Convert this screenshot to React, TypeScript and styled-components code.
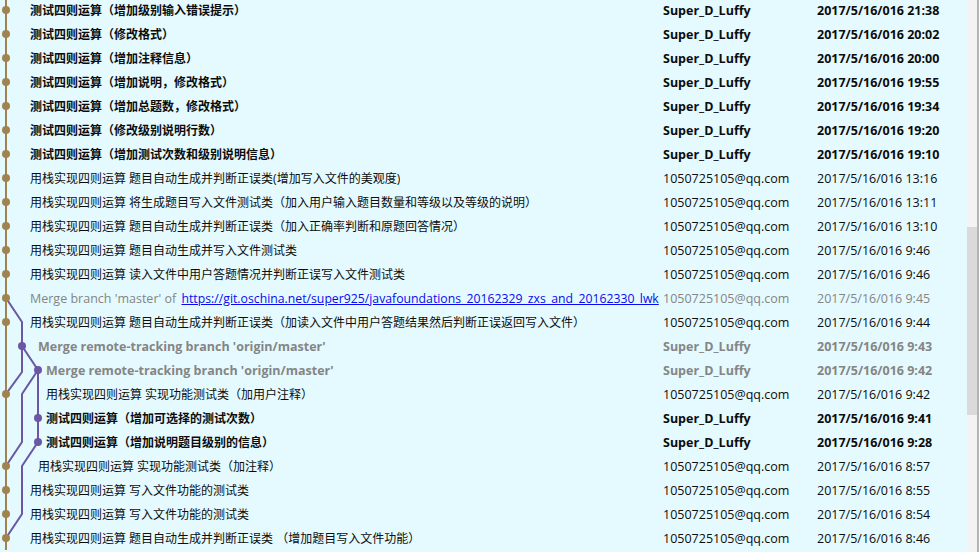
import styled, { createGlobalStyle } from 'styled-components';

type Tone = 'bold' | 'normal' | 'mergeBold' | 'mergeGray';

interface ICommit {
  message: string;
  link?: string;
  author: string;
  date: string;
  tone: Tone;
  lane: number;
  indent: number;
}

const LUFFY = 'Super_D_Luffy';
const QQ = '1050725105@qq.com';
const DAY = '2017/5/16/016';

const commits: ICommit[] = [
  { message: '测试四则运算（增加级别输入错误提示）', author: LUFFY, date: `${DAY} 21:38`, tone: 'bold', lane: 0, indent: 30 },
  { message: '测试四则运算（修改格式）', author: LUFFY, date: `${DAY} 20:02`, tone: 'bold', lane: 0, indent: 30 },
  { message: '测试四则运算（增加注释信息）', author: LUFFY, date: `${DAY} 20:00`, tone: 'bold', lane: 0, indent: 30 },
  { message: '测试四则运算（增加说明，修改格式）', author: LUFFY, date: `${DAY} 19:55`, tone: 'bold', lane: 0, indent: 30 },
  { message: '测试四则运算（增加总题数，修改格式）', author: LUFFY, date: `${DAY} 19:34`, tone: 'bold', lane: 0, indent: 30 },
  { message: '测试四则运算（修改级别说明行数）', author: LUFFY, date: `${DAY} 19:20`, tone: 'bold', lane: 0, indent: 30 },
  { message: '测试四则运算（增加测试次数和级别说明信息）', author: LUFFY, date: `${DAY} 19:10`, tone: 'bold', lane: 0, indent: 30 },
  { message: '用栈实现四则运算 题目自动生成并判断正误类(增加写入文件的美观度)', author: QQ, date: `${DAY} 13:16`, tone: 'normal', lane: 0, indent: 30 },
  { message: '用栈实现四则运算 将生成题目写入文件测试类（加入用户输入题目数量和等级以及等级的说明）', author: QQ, date: `${DAY} 13:11`, tone: 'normal', lane: 0, indent: 30 },
  { message: '用栈实现四则运算 题目自动生成并判断正误类（加入正确率判断和原题回答情况）', author: QQ, date: `${DAY} 13:10`, tone: 'normal', lane: 0, indent: 30 },
  { message: '用栈实现四则运算 题目自动生成并写入文件测试类', author: QQ, date: `${DAY} 9:46`, tone: 'normal', lane: 0, indent: 30 },
  { message: '用栈实现四则运算 读入文件中用户答题情况并判断正误写入文件测试类', author: QQ, date: `${DAY} 9:46`, tone: 'normal', lane: 0, indent: 30 },
  {
    message: "Merge branch 'master' of ",
    link: 'https://git.oschina.net/super925/javafoundations_20162329_zxs_and_20162330_lwk',
    author: QQ,
    date: `${DAY} 9:45`,
    tone: 'mergeGray',
    lane: 0,
    indent: 30,
  },
  { message: '用栈实现四则运算 题目自动生成并判断正误类（加读入文件中用户答题结果然后判断正误返回写入文件）', author: QQ, date: `${DAY} 9:44`, tone: 'normal', lane: 0, indent: 30 },
  { message: "Merge remote-tracking branch 'origin/master'", author: LUFFY, date: `${DAY} 9:43`, tone: 'mergeBold', lane: 1, indent: 38 },
  { message: "Merge remote-tracking branch 'origin/master'", author: LUFFY, date: `${DAY} 9:42`, tone: 'mergeBold', lane: 2, indent: 46 },
  { message: '用栈实现四则运算 实现功能测试类（加用户注释）', author: QQ, date: `${DAY} 9:42`, tone: 'normal', lane: 0, indent: 46 },
  { message: '测试四则运算（增加可选择的测试次数）', author: LUFFY, date: `${DAY} 9:41`, tone: 'bold', lane: 2, indent: 46 },
  { message: '测试四则运算（增加说明题目级别的信息）', author: LUFFY, date: `${DAY} 9:28`, tone: 'bold', lane: 2, indent: 46 },
  { message: '用栈实现四则运算 实现功能测试类（加注释）', author: QQ, date: `${DAY} 8:57`, tone: 'normal', lane: 0, indent: 38 },
  { message: '用栈实现四则运算 写入文件功能的测试类', author: QQ, date: `${DAY} 8:55`, tone: 'normal', lane: 0, indent: 30 },
  { message: '用栈实现四则运算 写入文件功能的测试类', author: QQ, date: `${DAY} 8:54`, tone: 'normal', lane: 0, indent: 30 },
  { message: '用栈实现四则运算 题目自动生成并判断正误类 （增加题目写入文件功能）', author: QQ, date: `${DAY} 8:46`, tone: 'normal', lane: 0, indent: 30 },
];

const ROW_H = 24;
const FIRST_TOP = -2;
const LANE_X = [6, 22, 38];
const MASTER = '#a0834f';
const BRANCH = '#6b57a3';

// branch lines in list coordinates (row centre = 10 + 24 * index)
const branchPaths = [
  'M6 298 L22 322 L22 346',
  'M22 346 L22 372 L6 394',
  'M22 346 L38 370',
  'M38 370 L38 442',
  'M38 370 L22 394 L22 442 L6 466',
  'M38 442 L22 466 L22 514 L6 538',
];

const GlobalStyle = createGlobalStyle`
  html, body {
    margin: 0;
    padding: 0;
    background: #e4faff;
  }
`;

const Window = styled.div`
  display: flex;
  width: 979px;
  height: 552px;
  overflow: hidden;
  background: #e4faff;
`;

const List = styled.div`
  flex: 1;
  min-width: 0;
  overflow: hidden;
`;

const Rows = styled.div`
  margin-top: ${FIRST_TOP}px;
`;

const Row = styled.div`
  display: grid;
  grid-template-columns: 663px 154px 1fr;
  align-items: center;
  height: ${ROW_H}px;
`;

const Subject = styled.div`
  display: flex;
  align-items: center;
  height: 100%;
  overflow: hidden;
`;

const GraphSvg = styled.svg`
  display: block;
  flex-shrink: 0;
`;

const toneColor = (tone: Tone) => (tone === 'mergeBold' || tone === 'mergeGray' ? '#858585' : '#0c0c0c');
const toneWeight = (tone: Tone) => (tone === 'bold' || tone === 'mergeBold' ? 700 : 400);

const Text = styled.span<{ $tone: Tone }>`
  font-family: 'Open Sans', 'Noto Sans CJK SC', sans-serif;
  font-size: 12.5px;
  line-height: ${ROW_H - 2}px;
  padding-top: 2px;
  white-space: nowrap;
  overflow: hidden;
  color: ${(p) => toneColor(p.$tone)};
  font-weight: ${(p) => toneWeight(p.$tone)};
`;

const Message = styled(Text)<{ $latin: boolean }>`
  font-size: ${(p) => (p.$latin ? '12.5px' : '12px')};
`;

const Link = styled.a`
  font-size: 12.25px;
  margin-left: 2px;
  color: #0a0af0;
  text-decoration: underline;
`;

const Scrollbar = styled.div`
  width: 10px;
  flex-shrink: 0;
  padding-top: 227px;
  background: #f3f3f3;
  border-right: 2px solid #b4b4b4;
`;

const Thumb = styled.div`
  height: 188px;
  background: #dadada;
`;

function GraphCell({ index, commit }: { index: number; commit: ICommit }) {
  const top = FIRST_TOP + index * ROW_H;
  const cy = top + ROW_H / 2;
  const nodeColor = commit.lane === 0 ? MASTER : BRANCH;

  return (
    <GraphSvg width={commit.indent} height={ROW_H} viewBox={`0 ${top} ${commit.indent} ${ROW_H}`}>
      <line x1={LANE_X[0]} y1={top - 1} x2={LANE_X[0]} y2={top + ROW_H + 1} stroke={MASTER} strokeWidth={2} />
      {branchPaths.map((d) => (
        <path key={d} d={d} fill="none" stroke={BRANCH} strokeWidth={2} strokeLinejoin="round" />
      ))}
      <circle cx={LANE_X[commit.lane]} cy={cy} r={4} fill={nodeColor} />
    </GraphSvg>
  );
}

export default function App() {
  return (
    <>
      <GlobalStyle />
      <Window>
        <List>
          <Rows>
            {commits.map((commit, i) => (
              <Row key={i}>
                <Subject>
                  <GraphCell index={i} commit={commit} />
                  <Message $tone={commit.tone} $latin={commit.tone === 'mergeBold' || commit.tone === 'mergeGray'}>
                    {commit.message}
                    {commit.link && <Link href="#">{commit.link}</Link>}
                  </Message>
                </Subject>
                <Text $tone={commit.tone}>{commit.author}</Text>
                <Text $tone={commit.tone}>{commit.date}</Text>
              </Row>
            ))}
          </Rows>
        </List>
        <Scrollbar>
          <Thumb />
        </Scrollbar>
      </Window>
    </>
  );
}
